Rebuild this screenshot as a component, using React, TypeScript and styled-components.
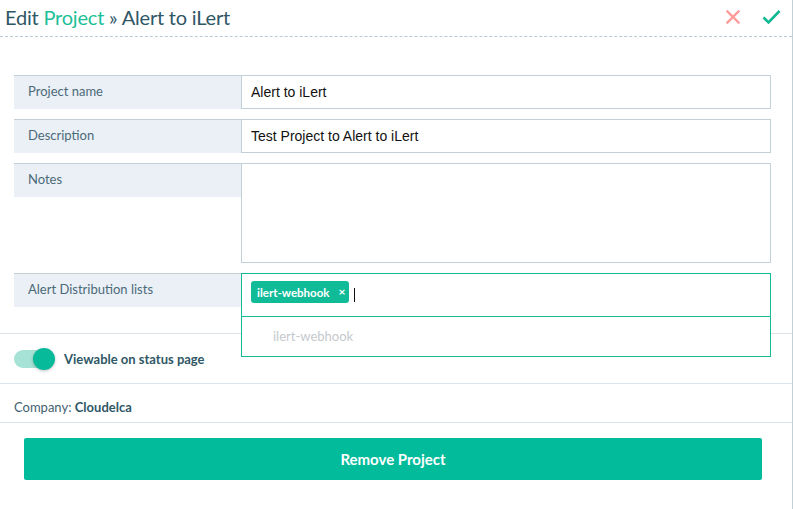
import React from "react";
import styled, { createGlobalStyle } from "styled-components";

const Global = createGlobalStyle`
  html, body { margin: 0; padding: 0; background: #fff; }
  body { font-family: "Lato", "Noto Sans", sans-serif; }
  * { box-sizing: border-box; }
`;

const Panel = styled.div`
  width: 793px;
  height: 509px;
  border-right: 1px solid #c3d0d6;
  background: #fff;
  overflow: hidden;
`;

const Header = styled.div`
  height: 37px;
  display: flex;
  align-items: center;
  justify-content: space-between;
  padding: 0 11px 2px 5px;
  border-bottom: 1px dashed #b9cbd2;
`;

const Title = styled.h1`
  margin: 0;
  font-size: 20px;
  font-weight: 400;
  color: #2f5766;
  letter-spacing: -0.2px;
`;

const Accent = styled.span`
  color: #1cbf98;
`;

const Actions = styled.div`
  display: flex;
  align-items: center;
  gap: 22px;
`;

const IconBtn = styled.button`
  border: 0;
  background: none;
  padding: 0;
  display: flex;
  cursor: pointer;
`;

const Form = styled.div`
  display: flex;
  flex-direction: column;
  gap: 10px;
  padding: 38px 21px 0 14px;
`;

const Row = styled.div`
  display: grid;
  grid-template-columns: 227px 1fr;
  align-items: start;
  position: relative;
`;

const Label = styled.div`
  height: 34px;
  background: #ebf0f7;
  border-top: 1px solid #c3d0d6;
  padding: 0 14px 3px;
  display: flex;
  align-items: center;
  font-size: 13px;
  color: #4a6a77;
`;

const Input = styled.input`
  height: 34px;
  border: 1px solid #c3d0d6;
  padding: 0 9px;
  font-family: "Liberation Sans", Arial, sans-serif;
  font-size: 14px;
  color: #111;
  outline: none;
  width: 100%;
`;

const TextArea = styled.textarea`
  height: 100px;
  border: 1px solid #c3d0d6;
  resize: none;
  padding: 8px 9px;
  font-family: "Liberation Sans", Arial, sans-serif;
  font-size: 14px;
  outline: none;
  width: 100%;
  display: block;
`;

const MultiWrap = styled.div`
  position: relative;
`;

const MultiBox = styled.div`
  height: 44px;
  border: 1px solid #17b997;
  display: flex;
  align-items: flex-start;
  padding: 7px 9px;
  gap: 5px;
`;

const Tag = styled.span`
  height: 22px;
  display: inline-flex;
  align-items: center;
  gap: 9px;
  padding: 0 4px 0 6px;
  background: #10bb98;
  border-radius: 3px;
  color: #fff;
  font-size: 11.5px;
  font-weight: 700;
`;

const TagX = styled.span`
  font-size: 12px;
  font-weight: 700;
  line-height: 1;
`;

const Caret = styled.span`
  width: 1px;
  height: 14px;
  margin-top: 7px;
  background: #111;
`;

const Dropdown = styled.div`
  position: absolute;
  left: 0;
  right: 0;
  top: 100%;
  height: 40px;
  border: 1px solid #17b997;
  border-top: 0;
  background: #fff;
  display: flex;
  align-items: center;
  padding: 0 0 2px 31px;
  font-size: 13px;
  color: #c4c9cc;
  z-index: 2;
`;

const Section = styled.div<{ $h: number; $bottom?: boolean; $pt?: number }>`
  height: ${(p) => p.$h}px;
  border-top: 1px solid #dce4ea;
  ${(p) => (p.$bottom ? "border-bottom: 1px solid #dce4ea;" : "")}
  display: flex;
  align-items: center;
  padding: ${(p) => p.$pt ?? 0}px 14px 0;
`;

const Spacer = styled.div`
  height: 16px;
`;

const Toggle = styled.div`
  position: relative;
  width: 41px;
  height: 22px;
  display: flex;
  align-items: center;
`;

const Track = styled.div`
  width: 38px;
  height: 18px;
  border-radius: 9px;
  background: #a6e2d5;
`;

const Knob = styled.div`
  position: absolute;
  right: 0;
  top: 0;
  width: 22px;
  height: 22px;
  border-radius: 50%;
  background: #06ba9a;
  box-shadow: 0 1px 3px rgba(0, 0, 0, 0.25);
`;

const ToggleText = styled.span`
  margin-left: 9px;
  font-size: 13px;
  font-weight: 700;
  color: #2f5766;
`;

const Company = styled.span`
  font-size: 13px;
  color: #3f6170;
`;

const Strong = styled.b`
  font-weight: 700;
  color: #2f5766;
`;

const ButtonRow = styled.div`
  padding: 15px 30px 0 24px;
`;

const RemoveBtn = styled.button`
  width: 100%;
  height: 42px;
  border: 0;
  border-radius: 2px;
  background: #02bb9b;
  color: #fff;
  font-family: "Lato", "Noto Sans", sans-serif;
  font-size: 15px;
  font-weight: 700;
  cursor: pointer;
`;

export default function App() {
  return (
    <>
      <Global />
      <Panel>
        <Header>
          <Title>
            Edit <Accent>Project</Accent> » Alert to iLert
          </Title>
          <Actions>
            <IconBtn aria-label="cancel">
              <svg width="14" height="14" viewBox="0 0 14 14">
                <path d="M1.5 1.5 L12.5 12.5 M12.5 1.5 L1.5 12.5" stroke="#ff9a9a" strokeWidth="2.4" strokeLinecap="square" />
              </svg>
            </IconBtn>
            <IconBtn aria-label="save">
              <svg width="19" height="16" viewBox="0 0 19 16">
                <path d="M1.5 8.5 L6.5 13.5 L17.5 2" stroke="#10b993" strokeWidth="2.6" fill="none" />
              </svg>
            </IconBtn>
          </Actions>
        </Header>
        <Form>
          <Row>
            <Label>Project name</Label>
            <Input defaultValue="Alert to iLert" />
          </Row>
          <Row>
            <Label>Description</Label>
            <Input defaultValue="Test Project to Alert to iLert" />
          </Row>
          <Row>
            <Label>Notes</Label>
            <TextArea />
          </Row>
          <Row>
            <Label>Alert Distribution lists</Label>
            <MultiWrap>
              <MultiBox>
                <Tag>
                  ilert-webhook <TagX>×</TagX>
                </Tag>
                <Caret />
              </MultiBox>
              <Dropdown>ilert-webhook</Dropdown>
            </MultiWrap>
          </Row>
        </Form>
        <Spacer />
        <Section $h={50}>
          <Toggle>
            <Track />
            <Knob />
          </Toggle>
          <ToggleText>Viewable on status page</ToggleText>
        </Section>
        <Section $h={40} $bottom $pt={8}>
          <Company>
            Company: <Strong>Cloudelca</Strong>
          </Company>
        </Section>
        <ButtonRow>
          <RemoveBtn>Remove Project</RemoveBtn>
        </ButtonRow>
      </Panel>
    </>
  );
}
